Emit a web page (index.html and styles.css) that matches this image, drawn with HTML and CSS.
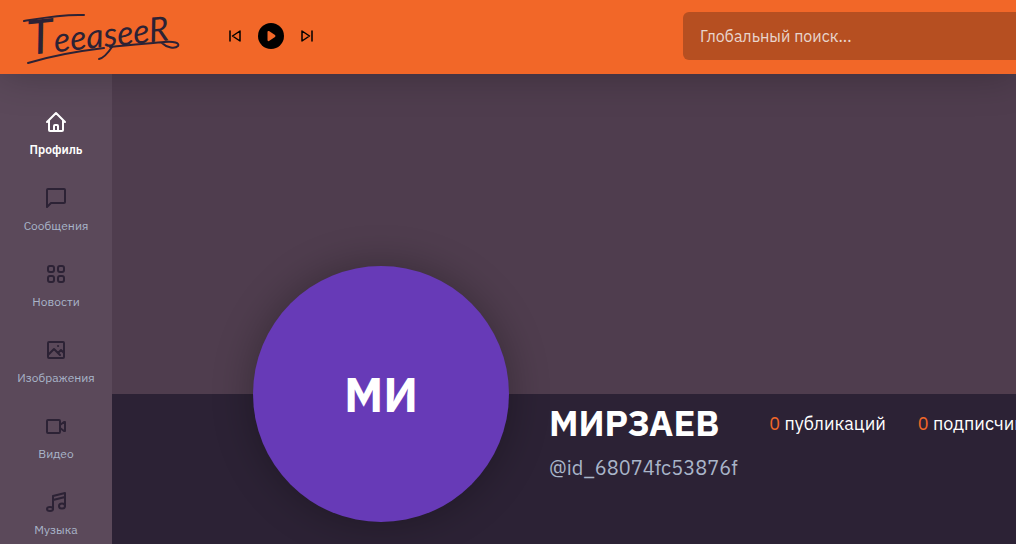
FILE: index.html
```html
<!DOCTYPE html>
<html lang="ru">
<head>
    <meta charset="UTF-8">
    <meta name="viewport" content="width=device-width, initial-scale=1.0">
    <title>МИРЗАЕВ</title>
    <link rel="stylesheet" href="styles.css">
</head>
<body>
    <header class="header">
        <a class="logo" href="#" aria-label="TeeaseeR">
            <svg width="160" height="60" viewBox="0 0 160 60">
                <text class="logo-text" x="5" y="49" transform="rotate(-6 5 49)"><tspan class="logo-cap">T</tspan>eeaseeR</text>
                <path d="M4 57C30 49 55 45 80 42M86 41C105 39 130 37 140 36C150 35 156 37 154 40C151 43 143 42 138 37"/>
                <path d="M88 41C84 47 80 52 75 53"/>
                <path d="M0 15C18 12 38 8 60 9"/>
            </svg>
        </a>

        <div class="player">
            <button type="button" aria-label="Назад">
                <svg width="16" height="16" viewBox="0 0 16 16"><path d="M3 3v10M13 3v10L5.500 8z"/></svg>
            </button>
            <button type="button" class="play" aria-label="Играть">
                <svg width="12" height="12" viewBox="0 0 12 12"><path d="M2.500 2v8q0 1.500 1.500 1l6-4q1-1 0-2L4 1Q2.500.5 2.500 2z"/></svg>
            </button>
            <button type="button" aria-label="Вперёд">
                <svg width="16" height="16" viewBox="0 0 16 16"><path d="M13 3v10M3 3v10L10.500 8z"/></svg>
            </button>
        </div>

        <input class="search" type="text" placeholder="Глобальный поиск..." aria-label="Глобальный поиск">
    </header>

    <div class="layout">
        <nav class="sidebar">
            <a class="active" href="#">
                <svg width="24" height="24" viewBox="0 0 24 24"><path d="M3 12l9-9 9 9M5 10v10q0 1 1 1h12q1 0 1-1V10M10 21v-5q0-1 1-1h2q1 0 1 1v5"/></svg>
                Профиль
            </a>
            <a href="#">
                <svg width="24" height="24" viewBox="0 0 24 24"><path d="M4 3h16q1 0 1 1v12q0 1-1 1H7l-4 4V4q0-1 1-1z"/></svg>
                Сообщения
            </a>
            <a href="#">
                <svg width="24" height="24" viewBox="0 0 24 24"><rect x="4" y="4" width="6" height="6" rx="2"/><rect x="14" y="4" width="6" height="6" rx="2"/><rect x="4" y="14" width="6" height="6" rx="2"/><rect x="14" y="14" width="6" height="6" rx="2"/></svg>
                Новости
            </a>
            <a href="#">
                <svg width="24" height="24" viewBox="0 0 24 24"><rect x="4" y="4" width="16" height="16" rx="1"/><path d="M4 17l6-6 6 6M14 15l3-3 3 3M14 8h.1"/></svg>
                Изображения
            </a>
            <a href="#">
                <svg width="24" height="24" viewBox="0 0 24 24"><rect x="3" y="6" width="13" height="13" rx="1"/><path d="M16 11l4-3h1v9h-1l-4-3"/></svg>
                Видео
            </a>
            <a href="#">
                <svg width="24" height="24" viewBox="0 0 24 24"><path d="M9 19V6l12-3v13M9 10l12-3"/><ellipse cx="6" cy="19" rx="3" ry="2"/><ellipse cx="18" cy="16" rx="3" ry="2.500"/></svg>
                Музыка
            </a>
        </nav>

        <main class="content">
            <div class="cover"></div>
            <section class="profile">
                <div class="avatar">МИ</div>
                <div class="info">
                    <div class="info-top">
                        <h1>МИРЗАЕВ</h1>
                        <ul class="stats">
                            <li><span>0</span> публикаций</li>
                            <li><span>0</span> подписчиков</li>
                        </ul>
                    </div>
                    <p class="user-id">@id_68074fc53876f</p>
                </div>
            </section>
        </main>
    </div>
</body>
</html>
```
FILE: styles.css
```css
* {
    box-sizing: border-box;
}

body {
    font-family: "IBM Plex Sans", Inter, sans-serif;
    margin: 0;
    height: 100vh;
    overflow: hidden;
    display: flex;
    flex-direction: column;
    background-color: #2c2235;
    color: #fff;
}

svg {
    fill: none;
    stroke: currentColor;
    stroke-width: 2;
    stroke-linecap: round;
    stroke-linejoin: round;
}

button {
    padding: 0;
    border: none;
    background: none;
    color: #000;
    cursor: pointer;
    display: flex;
    align-items: center;
    justify-content: center;
}

.header {
    position: relative;
    z-index: 1;
    display: flex;
    align-items: center;
    height: 74px;
    flex-shrink: 0;
    padding: 0 0 2px 24px;
    background-color: #f26728;
    box-shadow: 0 0 40px rgba(0, 0, 0, 0.25);
}

.logo {
    display: flex;
    color: #2c2235;
}

.logo svg {
    overflow: visible;
}

.logo-text {
    font-family: Lato, sans-serif;
    font-size: 34px;
    font-style: italic;
    fill: #2c2235;
    stroke: none;
}

.logo-cap {
    font-size: 48px;
}

.player {
    display: flex;
    align-items: center;
    gap: 15px;
    margin-left: 43px;
    margin-right: 368px;
}

.player svg {
    stroke-width: 1.5;
}

.play {
    width: 26px;
    height: 26px;
    border-radius: 50%;
    background-color: #000;
    color: #f26728;
}

.play svg {
    fill: currentColor;
    stroke: none;
}

.search {
    flex: 1;
    min-width: 0;
    height: 48px;
    padding: 0 17px;
    border: none;
    border-radius: 6px 0 0 6px;
    background-color: #b64f21;
    color: #fff;
    font-family: inherit;
    font-size: 16px;
}

.search::placeholder {
    color: #e8d5cd;
}

.layout {
    display: flex;
    flex: 1;
    min-height: 0;
}

.sidebar {
    display: flex;
    flex-direction: column;
    gap: 28px;
    width: 112px;
    flex-shrink: 0;
    padding-top: 36px;
    background-color: #5b495a;
}

.sidebar a {
    display: flex;
    flex-direction: column;
    align-items: center;
    gap: 8px;
    color: #a9b5c9;
    font-size: 12px;
    line-height: 16px;
    text-decoration: none;
}

.sidebar svg {
    color: #2c2235;
}

.sidebar .active,
.sidebar .active svg {
    color: #fff;
    font-weight: 600;
}

.content {
    flex: 1;
    min-width: 0;
}

.cover {
    height: 320px;
    background-color: #4f3d4e;
}

.profile {
    display: flex;
    gap: 40px;
    padding-left: 141px;
    white-space: nowrap;
}

.avatar {
    display: flex;
    align-items: center;
    justify-content: center;
    width: 256px;
    height: 256px;
    flex-shrink: 0;
    margin-top: -128px;
    border-radius: 50%;
    background-color: #673ab7;
    box-shadow: 0 0 40px rgba(0, 0, 0, 0.3);
    font-size: 48px;
    font-weight: bold;
}

.info {
    padding-top: 8px;
}

.info-top {
    display: flex;
    align-items: center;
    gap: 50px;
}

h1 {
    margin: 0;
    font-size: 36px;
    line-height: 42px;
}

.stats {
    display: flex;
    gap: 32px;
    margin: 0;
    padding: 0;
    list-style: none;
    font-size: 18px;
}

.stats span {
    color: #f26728;
}

.user-id {
    margin: 12px 0 0;
    color: #a9b5c9;
    font-size: 20px;
    line-height: 24px;
}
```
